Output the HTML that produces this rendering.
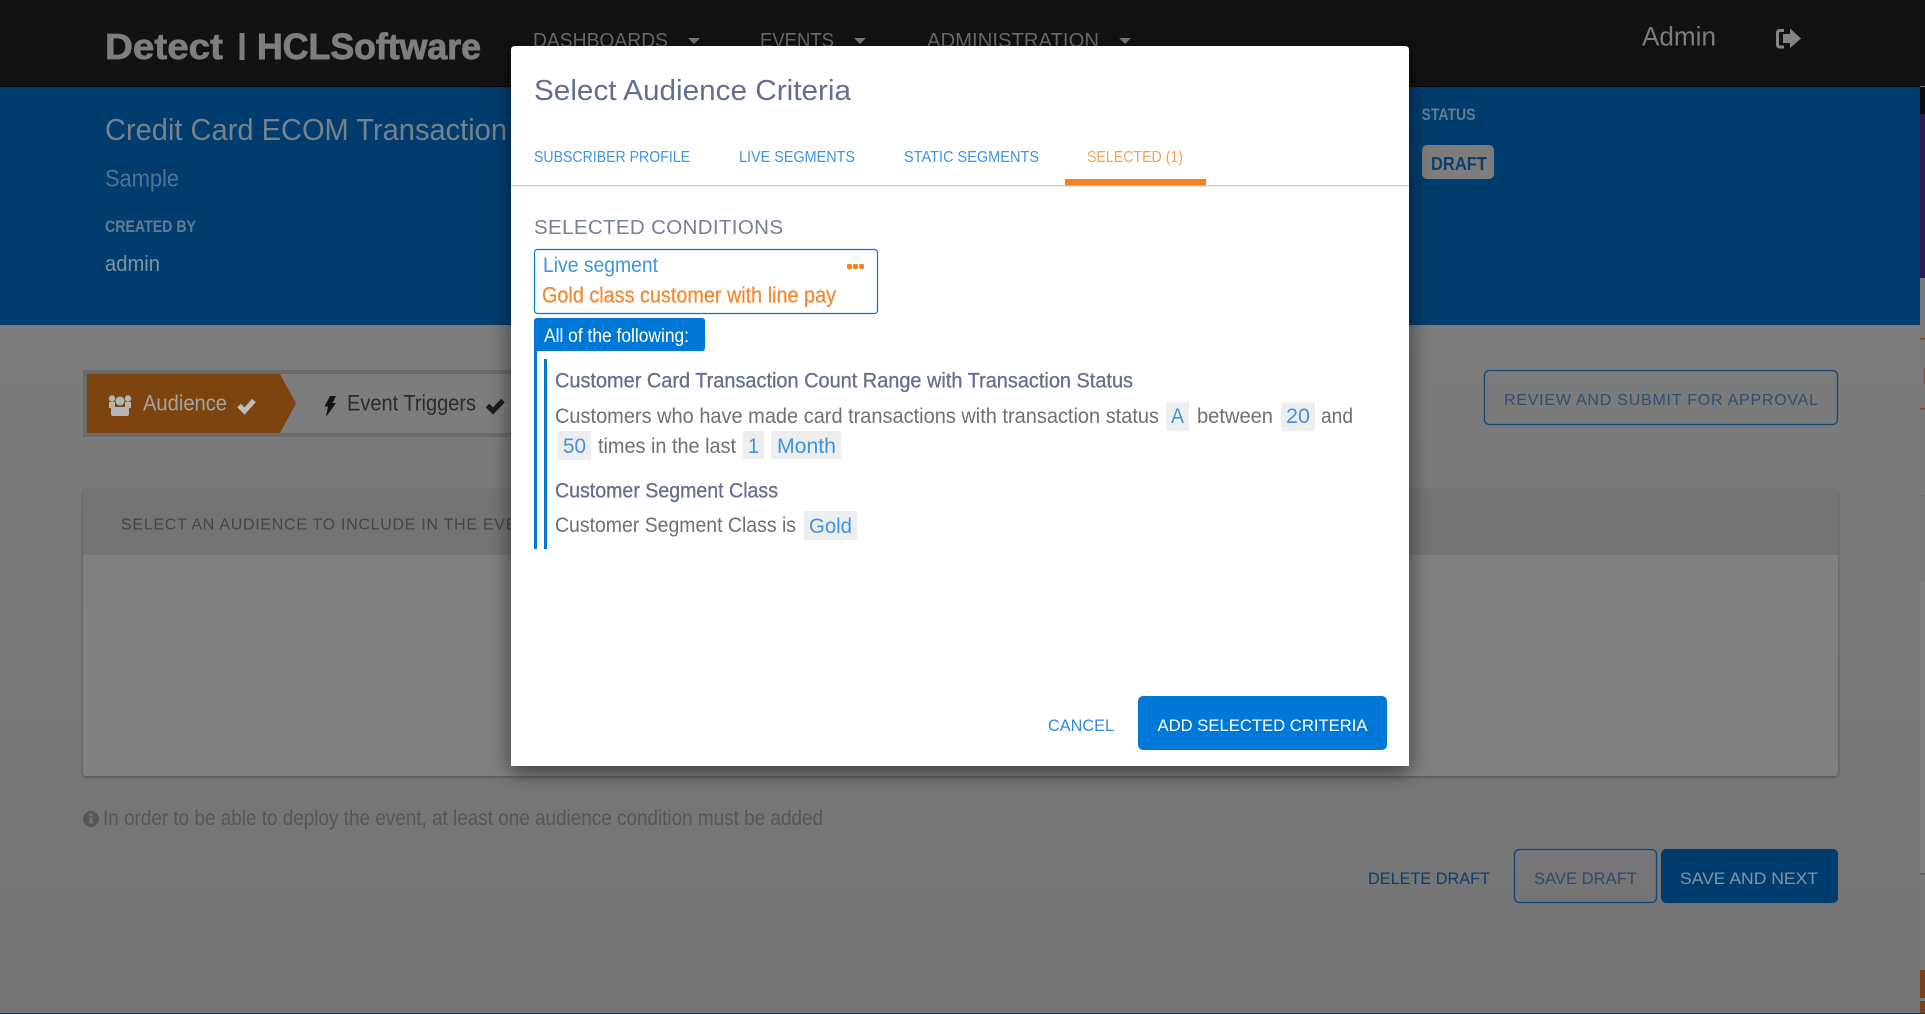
<!DOCTYPE html>
<html lang="en"><head><meta charset="utf-8"><title>Select Audience Criteria</title>
<style>
html,body{margin:0;padding:0;width:1925px;height:1014px;overflow:hidden;background:#797979}
svg{display:block;position:absolute;left:0;top:0}
text{font-family:"Liberation Sans",Arial,sans-serif;white-space:pre}
.b{font-weight:700}
</style></head><body>
<svg xmlns="http://www.w3.org/2000/svg" width="1925" height="1014" viewBox="0 0 1925 1014">
<defs>
<linearGradient id="bg" x1="0" y1="0" x2="0" y2="1"><stop offset="0" stop-color="#7c7c7c"/><stop offset="1" stop-color="#747474"/></linearGradient>
<filter id="ms" x="-10%" y="-10%" width="120%" height="125%"><feDropShadow dx="0" dy="6" stdDeviation="11" flood-color="#000" flood-opacity=".55"/></filter>
<filter id="cs" x="-2%" y="-5%" width="104%" height="110%"><feDropShadow dx="0" dy="1" stdDeviation="1.5" flood-color="#000" flood-opacity=".35"/></filter>
</defs>

<!-- page background -->
<rect x="0" y="325" width="1925" height="689" fill="url(#bg)"/>
<rect x="0" y="0" width="1925" height="86" fill="#121212"/>
<rect x="0" y="86" width="1920" height="1" fill="#050505"/>
<rect x="0" y="87" width="1920" height="238" fill="#003d6e"/>

<!-- right edge slivers -->
<rect x="1920" y="87" width="5" height="27" fill="#0c0c0c"/>
<rect x="1920" y="114" width="5" height="164" fill="#2f1a4f"/>
<rect x="1920" y="278" width="5" height="736" fill="#7a7a7a"/>
<rect x="1920" y="338" width="5" height="1.5" fill="#7d4a2a"/>
<rect x="1920" y="408" width="5" height="1.5" fill="#7d4a2a"/>
<rect x="1924" y="368" width="1" height="16" fill="#7d4a2a"/>
<rect x="1920" y="495" width="5" height="1" fill="#6e6e6e"/>
<rect x="1920" y="581" width="5" height="292" fill="#808080"/>
<rect x="1920" y="873" width="5" height="1.5" fill="#5c5c5c"/>
<rect x="1920" y="970" width="5" height="28" fill="#7a3f1e"/>
<rect x="1920" y="1001" width="5" height="12" fill="#7a3f1e"/>
<rect x="0" y="1013" width="1925" height="1" fill="#003d6e"/>

<!-- top nav -->
<text x="105" y="59" font-size="36" class="b" fill="#7e7e7e" stroke="#7e7e7e" stroke-width=".7" textLength="118" lengthAdjust="spacingAndGlyphs">Detect</text>
<rect x="239.5" y="33" width="5" height="27" fill="#7e7e7e"/>
<text x="257" y="59" font-size="36" class="b" fill="#7e7e7e" stroke="#7e7e7e" stroke-width=".9" textLength="224" lengthAdjust="spacingAndGlyphs">HCLSoftware</text>
<text x="533" y="47" font-size="20" fill="#6c6c6c" textLength="135" lengthAdjust="spacingAndGlyphs">DASHBOARDS</text>
<polygon points="688,38 700,38 694,44" fill="#7a7a7a"/>
<text x="760" y="47" font-size="20" fill="#6c6c6c" textLength="74" lengthAdjust="spacingAndGlyphs">EVENTS</text>
<polygon points="854,38 866,38 860,44" fill="#7a7a7a"/>
<text x="927" y="47" font-size="20" fill="#6c6c6c" textLength="172" lengthAdjust="spacingAndGlyphs">ADMINISTRATION</text>
<polygon points="1119,38 1131,38 1125,44" fill="#7a7a7a"/>
<text x="1642" y="45.5" font-size="27" fill="#7c7c7c" textLength="74" lengthAdjust="spacingAndGlyphs">Admin</text>
<path d="M1784 30.5H1780Q1777.5 30.5 1777.5 33V44.5Q1777.5 47 1780 47H1784" fill="none" stroke="#858585" stroke-width="3"/>
<polygon points="1783,34 1790,34 1790,28.5 1801,38.5 1790,48 1790,43 1783,43" fill="#858585"/>

<!-- blue header -->
<text x="105" y="140" font-size="31" fill="#75818b" textLength="402" lengthAdjust="spacingAndGlyphs">Credit Card ECOM Transaction</text>
<text x="105" y="186.5" font-size="24" fill="#4f7594" textLength="74" lengthAdjust="spacingAndGlyphs">Sample</text>
<text x="105" y="232" font-size="16.5" class="b" fill="#627c92" textLength="91" lengthAdjust="spacingAndGlyphs">CREATED BY</text>
<text x="105" y="271" font-size="22" fill="#8193a3" textLength="55" lengthAdjust="spacingAndGlyphs">admin</text>
<text x="1421.5" y="120" font-size="16.5" class="b" fill="#627c92" textLength="54" lengthAdjust="spacingAndGlyphs">STATUS</text>
<rect x="1422" y="145" width="72" height="34" rx="5" fill="#7d7d7d"/>
<text x="1431" y="170" font-size="18" class="b" fill="#0d3f6c" textLength="56" lengthAdjust="spacingAndGlyphs">DRAFT</text>

<!-- stepper -->
<rect x="83" y="370" width="440" height="67" fill="#6b6b6b"/>
<rect x="87" y="374" width="436" height="59" fill="#7d7d7d"/>
<polygon points="87,374 280,374 296,403.5 280,433 87,433" fill="#7d440f"/>
<g fill="#b5b5b5">
<circle cx="120" cy="401" r="4.5"/><circle cx="112" cy="398.5" r="3.2"/><circle cx="128" cy="398.5" r="3.2"/>
<path d="M109 402h6v6h-6zM125 402h6v6h-6z"/>
<path d="M112 407h16q1 0 1 2v5q0 2-2 2h-14q-2 0-2-2v-5q0-2 1-2z"/>
</g>
<text x="143" y="410.5" font-size="22" fill="#a3a3a3" textLength="84" lengthAdjust="spacingAndGlyphs">Audience</text>
<polyline points="239,405.5 244.5,411 254,400.5" fill="none" stroke="#bdbdbd" stroke-width="5"/>
<polygon points="330,396 336,396 332.5,403 336,403 326,417 328,406.5 324.5,406.5" fill="#141414"/>
<text x="347" y="410.5" font-size="22" fill="#2b2b2b" textLength="129" lengthAdjust="spacingAndGlyphs">Event Triggers</text>
<polyline points="487.5,405.5 493,411 503,400.5" fill="none" stroke="#1c1c1c" stroke-width="5"/>

<!-- review button -->
<rect x="1484.5" y="370.5" width="353" height="54" rx="5" fill="none" stroke="#164a78" stroke-width="1.3"/>
<text x="1504" y="405" font-size="16" fill="#2e4f6e" textLength="314">REVIEW AND SUBMIT FOR APPROVAL</text>

<!-- card -->
<rect x="83" y="490" width="1755" height="286" rx="3" fill="#808080" filter="url(#cs)"/>
<path d="M83 555V493q0-3 3-3H1835q3 0 3 3V555z" fill="#747474"/>
<text x="121" y="529.5" font-size="16" fill="#454545" textLength="418">SELECT AN AUDIENCE TO INCLUDE IN THE EVENT</text>

<!-- info -->
<circle cx="91" cy="819" r="8" fill="#575757"/>
<rect x="89.6" y="817.5" width="3" height="6" fill="#787878"/><rect x="89.6" y="813.5" width="3" height="2.6" fill="#787878"/>
<text x="103" y="825" font-size="21" fill="#565656" textLength="720" lengthAdjust="spacingAndGlyphs">In order to be able to deploy the event, at least one audience condition must be added</text>

<!-- bottom actions -->
<text x="1368" y="884" font-size="17" fill="#0f3d68" textLength="122" lengthAdjust="spacingAndGlyphs">DELETE DRAFT</text>
<rect x="1514.5" y="849.5" width="142" height="53" rx="5" fill="none" stroke="#0f4677" stroke-width="1.3"/>
<text x="1534" y="884" font-size="17" fill="#2b4c6c" textLength="103" lengthAdjust="spacingAndGlyphs">SAVE DRAFT</text>
<rect x="1661" y="849" width="177" height="54" rx="5" fill="#003d6e"/>
<text x="1680" y="884" font-size="17" fill="#8094a6" textLength="138" lengthAdjust="spacingAndGlyphs">SAVE AND NEXT</text>

<!-- modal -->
<path d="M511 50q0-4 4-4H1405q4 0 4 4V766H511z" fill="#fff" filter="url(#ms)"/>
<text x="534" y="100" font-size="29" fill="#636f90" textLength="317" lengthAdjust="spacingAndGlyphs">Select Audience Criteria</text>

<text x="534" y="162" font-size="16" fill="#3d94e2" textLength="156" lengthAdjust="spacingAndGlyphs">SUBSCRIBER PROFILE</text>
<text x="739" y="162" font-size="16" fill="#3d94e2" textLength="116" lengthAdjust="spacingAndGlyphs">LIVE SEGMENTS</text>
<text x="904" y="162" font-size="16" fill="#3d94e2" textLength="135" lengthAdjust="spacingAndGlyphs">STATIC SEGMENTS</text>
<text x="1087" y="162" font-size="16" fill="#f8a052" textLength="96" lengthAdjust="spacingAndGlyphs">SELECTED (1)</text>
<rect x="511" y="185" width="898" height="1.4" fill="#cfcfcf"/>
<rect x="1065" y="179" width="141" height="6.5" fill="#f58220"/>

<text x="534" y="234" font-size="20.5" fill="#77809b" textLength="249">SELECTED CONDITIONS</text>

<rect x="534.5" y="249.5" width="343" height="64" rx="3" fill="#fff" stroke="#0078d7" stroke-width="1.2"/>
<text x="543" y="272" font-size="21" fill="#3d94e2" textLength="115" lengthAdjust="spacingAndGlyphs">Live segment</text>
<rect x="847" y="264" width="5" height="5" rx="1.5" fill="#f58220"/><rect x="853" y="264" width="5" height="5" rx="1.5" fill="#f58220"/><rect x="859" y="264" width="5" height="5" rx="1.5" fill="#f58220"/>
<text x="542" y="302.5" font-size="22" fill="#f5872a" stroke="#f5872a" stroke-width=".25" textLength="294" lengthAdjust="spacingAndGlyphs">Gold class customer with line pay</text>

<path d="M534 321q0-3 3-3H702q3 0 3 3V348q0 3-3 3H537V549H534z" fill="#0078d7"/>
<text x="544" y="342" font-size="19" fill="#fff" textLength="145" lengthAdjust="spacingAndGlyphs">All of the following:</text>
<rect x="544" y="359" width="3" height="190" fill="#0078d7"/>

<text x="555" y="387.5" font-size="21.5" fill="#646f8d" stroke="#646f8d" stroke-width=".3" textLength="578" lengthAdjust="spacingAndGlyphs">Customer Card Transaction Count Range with Transaction Status</text>
<text x="555" y="423" font-size="21.5" fill="#707070" textLength="604" lengthAdjust="spacingAndGlyphs">Customers who have made card transactions with transaction status</text>
<rect x="1166" y="402" width="23" height="29" fill="#eeeeee"/>
<text x="1171" y="423" font-size="21" fill="#3d94e2" textLength="13" lengthAdjust="spacingAndGlyphs">A</text>
<text x="1197" y="423" font-size="21.5" fill="#707070" textLength="76" lengthAdjust="spacingAndGlyphs">between</text>
<rect x="1281" y="402" width="34" height="29" fill="#eeeeee"/>
<text x="1286" y="423" font-size="21" fill="#3d94e2" textLength="24" lengthAdjust="spacingAndGlyphs">20</text>
<text x="1321" y="423" font-size="21.5" fill="#707070" textLength="32" lengthAdjust="spacingAndGlyphs">and</text>

<rect x="558" y="431" width="33" height="29" fill="#eeeeee"/>
<text x="563" y="453" font-size="21" fill="#3d94e2" textLength="23" lengthAdjust="spacingAndGlyphs">50</text>
<text x="598" y="453" font-size="21.5" fill="#707070" textLength="138" lengthAdjust="spacingAndGlyphs">times in the last</text>
<rect x="743" y="431" width="21" height="28" fill="#eeeeee"/>
<text x="748" y="453" font-size="21" fill="#3d94e2" textLength="11" lengthAdjust="spacingAndGlyphs">1</text>
<rect x="771" y="431" width="70" height="28" fill="#eeeeee"/>
<text x="777" y="453" font-size="21" fill="#3d94e2" textLength="59" lengthAdjust="spacingAndGlyphs">Month</text>

<text x="555" y="497.5" font-size="21.5" fill="#646f8d" stroke="#646f8d" stroke-width=".3" textLength="223" lengthAdjust="spacingAndGlyphs">Customer Segment Class</text>
<text x="555" y="532" font-size="21.5" fill="#707070" textLength="241" lengthAdjust="spacingAndGlyphs">Customer Segment Class is</text>
<rect x="804" y="511" width="53" height="29" fill="#eeeeee"/>
<text x="809" y="533" font-size="21" fill="#3d94e2" textLength="43" lengthAdjust="spacingAndGlyphs">Gold</text>

<text x="1048" y="731" font-size="17" fill="#2f8ce0" textLength="66" lengthAdjust="spacingAndGlyphs">CANCEL</text>
<rect x="1138" y="696" width="249" height="54" rx="5" fill="#0078d7"/>
<text x="1157.5" y="731" font-size="17" fill="#fff" textLength="210" lengthAdjust="spacingAndGlyphs">ADD SELECTED CRITERIA</text>
</svg>
</body></html>
